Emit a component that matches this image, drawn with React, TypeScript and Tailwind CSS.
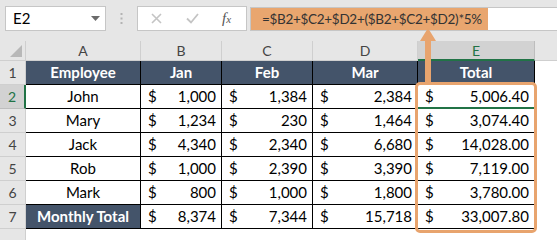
import React from "react";

const rows = [
  { n: 2, name: "John", jan: "1,000", feb: "1,384", mar: "2,384", total: "5,006.40" },
  { n: 3, name: "Mary", jan: "1,234", feb: "230", mar: "1,464", total: "3,074.40" },
  { n: 4, name: "Jack", jan: "4,340", feb: "2,340", mar: "6,680", total: "14,028.00" },
  { n: 5, name: "Rob", jan: "1,000", feb: "2,390", mar: "3,390", total: "7,119.00" },
  { n: 6, name: "Mark", jan: "800", feb: "1,000", mar: "1,800", total: "3,780.00" },
];

const font = { fontFamily: "Lato, 'Open Sans', sans-serif" };

export default function App() {
  return (
    <div className="relative w-[557px] h-[240px] overflow-hidden bg-[#e6e6e6] text-black" style={font}>
      {/* Formula bar */}
      <div className="flex items-start h-[41px] pt-[6px]">
        <div className="ml-[5px] w-[101px] h-[25px] bg-white border border-[#c6c6c6] flex items-center justify-between pl-[7px] pr-[5px] text-[15px]">
          <span>E2</span>
          <svg width="9" height="5" viewBox="0 0 9 5">
            <path d="M0 0 L9 0 L4.5 5 Z" fill="#6b6b6b" />
          </svg>
        </div>
        <div className="w-[31px] h-[25px] flex items-center justify-center">
          <svg width="3" height="11" viewBox="0 0 3 11">
            <rect x="0.5" y="0" width="2" height="2" fill="#b3b3b3" />
            <rect x="0.5" y="4.5" width="2" height="2" fill="#b3b3b3" />
            <rect x="0.5" y="9" width="2" height="2" fill="#b3b3b3" />
          </svg>
        </div>
        <div className="w-[110px] h-[25px] bg-white border border-[#c6c6c6] flex items-center">
          <svg className="ml-[13px]" width="11" height="11" viewBox="0 0 11 11">
            <path d="M1 1 L10 10 M10 1 L1 10" stroke="#c4c4c4" strokeWidth="1.6" />
          </svg>
          <svg className="ml-[24px]" width="13" height="11" viewBox="0 0 13 11">
            <path d="M1 5.5 L5 9.5 L12 1" stroke="#c4c4c4" strokeWidth="1.8" fill="none" />
          </svg>
          <span
            className="ml-[23px] text-[15px] italic text-[#555]"
            style={{ fontFamily: "'Liberation Serif', serif" }}
          >
            f<span className="text-[11px]">x</span>
          </span>
        </div>
        <div className="ml-[3px] flex-1 h-[24px] mt-[1px] bg-white border-l border-y border-[#c6c6c6] flex">
          <div className="w-[237px] h-full bg-[#e9a66f] flex items-center pl-[11px] text-[13.5px] text-[#333] whitespace-nowrap tracking-[-0.3px]">
            =$B2+$C2+$D2+($B2+$C2+$D2)*5%
          </div>
        </div>
      </div>

      {/* Sheet */}
      <div className="grid grid-cols-[26px_115px_81px_91px_105px_117px_1fr] text-[15px]">
        {/* column header row */}
        <div className="h-[20px] border-r border-b border-[#cfcfcf] relative">
          <svg className="absolute right-[3px] bottom-[3px]" width="12" height="12" viewBox="0 0 12 12">
            <path d="M12 0 L12 12 L0 12 Z" fill="#b8b8b8" />
          </svg>
        </div>
        {["A", "B", "C", "D"].map((c) => (
          <div key={c} className="h-[20px] border-r border-b border-[#cfcfcf] flex items-center justify-center text-[14px] text-[#444]">
            {c}
          </div>
        ))}
        <div className="h-[20px] bg-[#d2d2d2] border-r border-[#bdbdbd] border-b-2 border-b-[#217346] flex items-center justify-center text-[14px] text-[#217346]">
          E
        </div>
        <div className="h-[20px] border-b border-[#cfcfcf]" />

        {/* row 1 */}
        <RowHead n={1} />
        <HeadCell>Employee</HeadCell>
        <HeadCell>Jan</HeadCell>
        <HeadCell>Feb</HeadCell>
        <HeadCell>Mar</HeadCell>
        <HeadCell>Total</HeadCell>
        <div className="bg-white" />

        {rows.map((r) => (
          <React.Fragment key={r.n}>
            <RowHead n={r.n} active={r.n === 2} />
            <div className="h-[24px] bg-white border-r border-b border-black flex items-center justify-center">{r.name}</div>
            <Money v={r.jan} />
            <Money v={r.feb} />
            <Money v={r.mar} />
            <Money v={r.total} selected={r.n === 2} />
            <div className="bg-white" />
          </React.Fragment>
        ))}

        {/* row 7 */}
        <RowHead n={7} />
        <div className="h-[24px] bg-[#44546a] text-white font-bold border-r border-b border-black flex items-center justify-center">
          Monthly Total
        </div>
        <Money v="8,374" />
        <Money v="7,344" />
        <Money v="15,718" />
        <Money v="33,007.80" />
        <div className="bg-white" />

        {/* row 8 (partial) */}
        <div className="h-[12px] border-r border-[#cfcfcf]" />
        <div className="col-span-6 h-[12px] bg-white" />
      </div>

      {/* Highlight box around E2:E7 */}
      <div className="absolute left-[415px] top-[82px] w-[122px] h-[151px] border-[3px] border-[#e8a46e] rounded-[5px] pointer-events-none" />

      {/* Arrow pointing to the formula */}
      <svg className="absolute left-[418px] top-[27px] pointer-events-none" width="20" height="56" viewBox="0 0 20 56">
        <path d="M10 1 L18 14 L13 14 L13 55 L7 55 L7 14 L2 14 Z" fill="#e8a46e" />
      </svg>
    </div>
  );
}

function RowHead({ n, active }: { n: number; active?: boolean }) {
  if (active) {
    return (
      <div className="h-[24px] bg-[#d2d2d2] border-b border-[#bdbdbd] border-r-2 border-r-[#217346] flex items-center justify-center text-[14px] text-[#217346]">
        {n}
      </div>
    );
  }
  return (
    <div className="h-[24px] border-r border-b border-[#cfcfcf] flex items-center justify-center text-[14px] text-[#444]">
      {n}
    </div>
  );
}

function HeadCell({ children }: any) {
  return (
    <div className="h-[24px] bg-[#44546a] text-white font-bold border-r border-b border-black flex items-center justify-center">
      {children}
    </div>
  );
}

function Money({ v, selected }: { v: string; selected?: boolean }) {
  return (
    <div
      className={
        "h-[24px] bg-white border-r flex items-center justify-between pl-[7px] pr-[5px] " +
        (selected ? "border-b-2 border-r-black border-b-[#217346]" : "border-b border-black")
      }
    >
      <span>$</span>
      <span>{v}</span>
    </div>
  );
}
